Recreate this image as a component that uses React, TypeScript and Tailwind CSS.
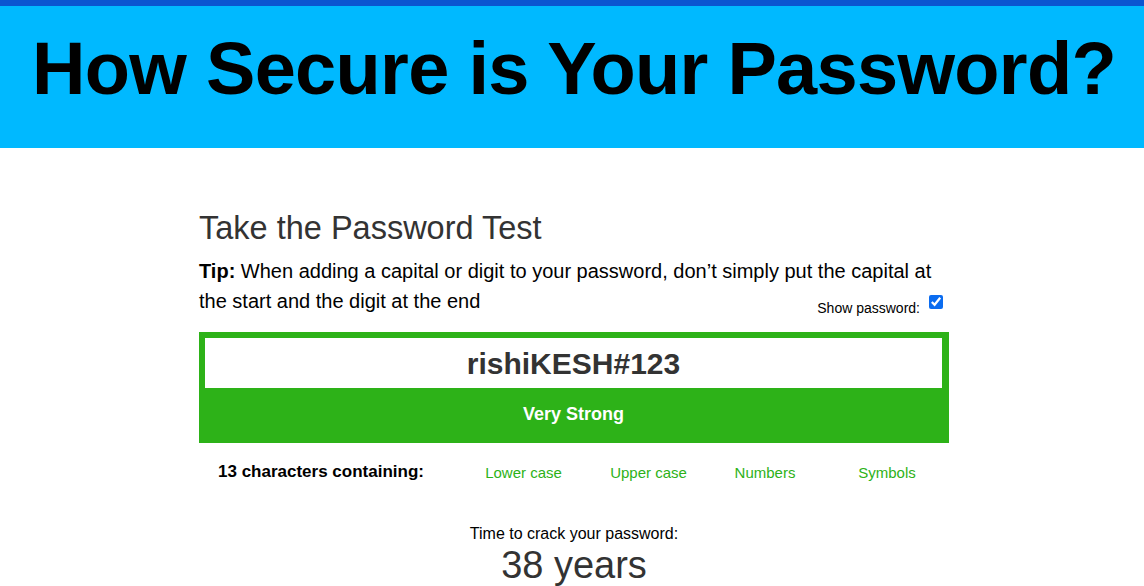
import React, { useState } from "react";

const traits = ["Lower case", "Upper case", "Numbers", "Symbols"];

const App = () => {
  const [show, setShow] = useState(true);

  return (
    <div className="min-h-[586px] bg-white font-['Liberation_Sans',Arial,sans-serif] text-[#333]">
      {/* Banner */}
      <header className="border-t-[6px] border-[#0b55d0] bg-[#00b9ff] h-[148px] flex items-center justify-center">
        <h1 className="text-[74px] font-bold tracking-[-0.7px] text-black leading-none pb-[16px] pl-[4px]">
          How Secure is Your Password?
        </h1>
      </header>

      <main className="w-[754px] mx-auto pl-[4px] pt-[62px]">
        <h2 className="text-[32.5px] leading-[36px] text-[#333]">Take the Password Test</h2>

        <p className="mt-[10px] text-[20px] leading-[30px] text-black">
          <b>Tip:</b> When adding a capital or digit to your password, don’t simply put the capital at the
          start and the digit at the end
          <label className="float-right mr-[6px] mt-[9px] flex items-center gap-[9px] text-[14px] leading-[16px]">
            Show password:
            <input
              type="checkbox"
              checked={show}
              onChange={() => setShow(!show)}
              className="w-[14px] h-[14px] accent-[#0b6cf0] mb-[12px]"
            />
          </label>
        </p>

        {/* Password box */}
        <div className="mt-[16px] bg-[#2db218] pt-[6px] pl-[6px] pr-[7px]">
          <div className="bg-white h-[50px] flex items-center justify-center">
            <span className="text-[30px] font-bold text-[#333]">{show ? "rishiKESH#123" : "•••••••••••••"}</span>
          </div>
          <div className="h-[55px] flex items-center justify-center text-white font-bold text-[18px] pb-[2px]">
            Very Strong
          </div>
        </div>

        {/* Composition */}
        <div className="flex items-start mt-[16px]">
          <div className="w-[262px] shrink-0 pl-[19px] text-[17px] font-bold text-black">13 characters containing:</div>
          <div className="flex text-[15px] text-[#2db218] pt-[3px]">
            <span className="w-[125px] shrink-0 text-center">{traits[0]}</span>
            <span className="w-[125px] shrink-0 text-center">{traits[1]}</span>
            <span className="w-[108px] shrink-0 text-center">{traits[2]}</span>
            <span className="w-[136px] shrink-0 text-center">{traits[3]}</span>
          </div>
        </div>

        <div className="mt-[40px] text-center">
          <div className="text-[16px] text-black leading-[18px]">Time to crack your password:</div>
          <div className="text-[38px] leading-[40px] text-[#333] mt-[2px]">38 years</div>
        </div>
      </main>
    </div>
  );
};

export default App;
